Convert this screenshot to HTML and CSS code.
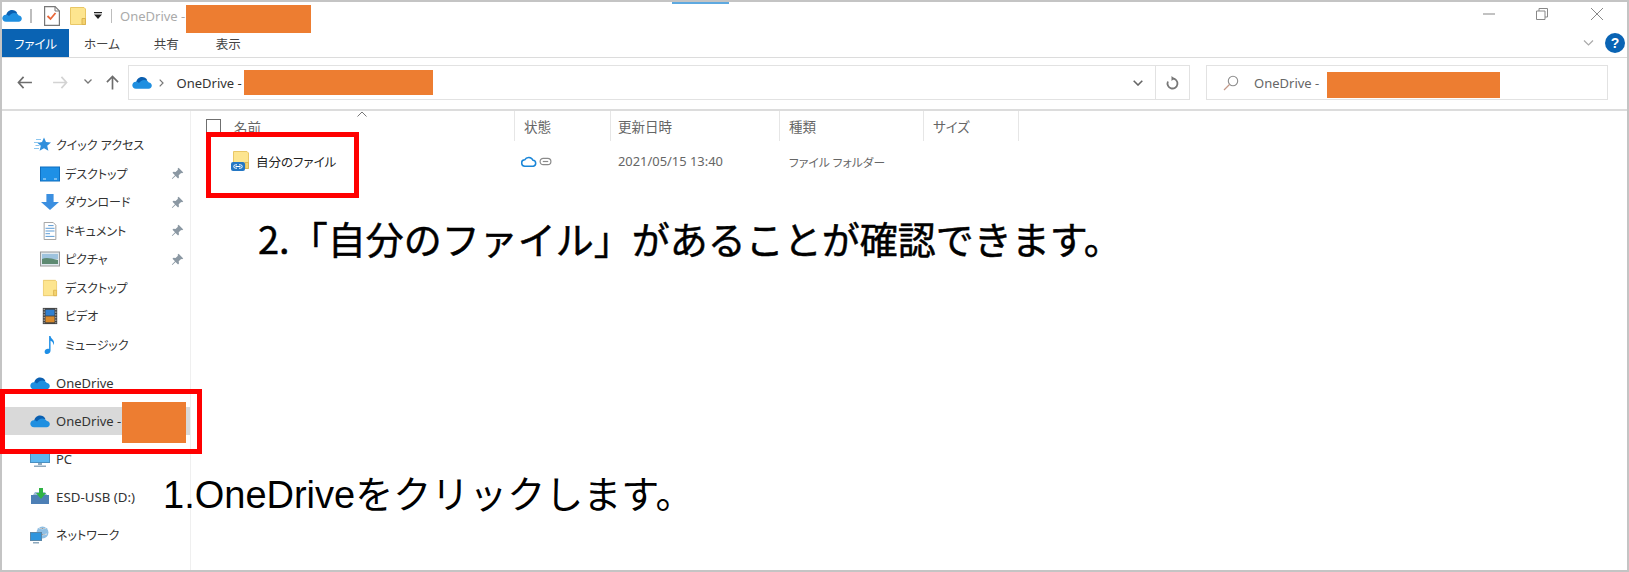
FILE: index.html
```html
<!DOCTYPE html>
<html lang="ja">
<head>
<meta charset="utf-8">
<title>OneDrive</title>
<link rel="stylesheet" href="styles.css">
</head>
<body>
<svg class="defs" aria-hidden="true">
  <symbol id="cloud" viewBox="0 0 20 13">
    <path fill="#0a5fb0" d="M4 7C4.300 3.600 6.800 1 10 1c2.300 0 4.200 1.200 5.300 3.200L10 9 4.500 9z"/>
    <path fill="#1f8fe0" d="M4 12.800C1.800 12.800.3 11.200.3 9.300.3 7.400 1.800 5.800 3.800 5.800c1.200 0 2.300.5 3.200 1.300 1-1.900 3-3.200 5.200-3.200 2.100 0 3.800 1 4.600 2.600 1.800.1 3 1.400 3 3.100 0 1.800-1.300 3.200-3.100 3.200z"/>
  </symbol>
  <symbol id="folder" viewBox="0 0 16 18">
    <path fill="#fde58f" stroke="#e9c766" d="M.5.500h13.500l1.500 1.500v15.500H.5z"/>
    <path fill="#f4d36f" stroke="#dcb451" d="M12 11.500h3.500v6H12z"/>
  </symbol>
  <symbol id="pin" viewBox="0 0 14 14">
    <path fill="#8b98a3" d="M8.200 0.800l5 5-1.300 1-1-.4-2.600 2.600.3 2.300-1 1-2.700-2.700L1.500 13 .9 12.400l3.400-3.500-2.700-2.700 1-1 2.300.3 2.600-2.600-.4-1z"/>
  </symbol>
  <symbol id="linkmark" viewBox="0 0 14 10">
    <rect x="1" y="1.500" width="12" height="7" rx="3.500" fill="none" stroke="#8a8a8a" stroke-width="1.300"/>
    <path d="M4 5h6" stroke="#8a8a8a" stroke-width="1.300"/>
  </symbol>
</svg>

<div class="window">
  <div class="frame">
    <div class="titlebar">
      <svg class="i-cloud"><use href="#cloud"/></svg>
      <span class="tb-sep tb-sep-a"></span>
      <svg class="i-check" viewBox="0 0 16 20"><path fill="#fff" stroke="#777" stroke-width="1.200" d="M.6.600h10.500l4.300 4.300v14.500H.6z"/><path fill="none" stroke="#777" d="M11 .6v4.400h4.400"/><path fill="none" stroke="#e8673a" stroke-width="1.800" d="M3.500 10l3 3 5-6"/></svg>
      <svg class="i-qfolder"><use href="#folder"/></svg>
      <svg class="i-drop" viewBox="0 0 8 7"><path d="M0 0h8v1.200H0z M0 2.500h8L4 7z" fill="#222"/></svg>
      <span class="tb-sep tb-sep-b"></span>
      <span class="tb-title">OneDrive -</span>
      <div class="winbtns">
        <svg class="wb wb-min" viewBox="0 0 12 12"><path d="M0 6h12" stroke="#999" stroke-width="1.200"/></svg>
        <svg class="wb wb-max" viewBox="0 0 12 12"><path d="M.5 3h8.500v8.500H.5z M3 3V.5h8.500V9H9" fill="none" stroke="#888"/></svg>
        <svg class="wb wb-close" viewBox="0 0 12 12"><path d="M0 0l12 12M12 0L0 12" stroke="#888" stroke-width="1"/></svg>
      </div>
    </div>

    <div class="ribbon">
      <span class="tab tab-file">ファイル</span>
      <span class="tab tab-home">ホーム</span>
      <span class="tab tab-share">共有</span>
      <span class="tab tab-view">表示</span>
      <svg class="i-collapse" viewBox="0 0 10 6"><path d="M.5.500L5 5 9.500.500" fill="none" stroke="#aaa" stroke-width="1.200"/></svg>
      <span class="help">?</span>
    </div>

    <div class="navbar">
      <svg class="nav-ic nav-back" viewBox="0 0 16 14"><path d="M7 1L1.500 7 7 13M1.500 7H16" fill="none" stroke="#6d6d6d" stroke-width="1.800"/></svg>
      <svg class="nav-ic nav-fwd" viewBox="0 0 16 14"><path d="M9 1l5.500 6L9 13M14.500 7H0" fill="none" stroke="#d3d3d3" stroke-width="1.800"/></svg>
      <svg class="nav-down" viewBox="0 0 8 5"><path d="M.5.500L4 4 7.500.500" fill="none" stroke="#777" stroke-width="1.300"/></svg>
      <svg class="nav-up" viewBox="0 0 14 15"><path d="M1 7l6-6 6 6M7 1v14" fill="none" stroke="#6d6d6d" stroke-width="1.800"/></svg>
      <div class="address">
        <svg class="i-cloud"><use href="#cloud"/></svg>
        <svg class="crumb" viewBox="0 0 5 8"><path d="M.7.700L4 4 .7 7.300" fill="none" stroke="#777" stroke-width="1.200"/></svg>
        <span class="addr-text">OneDrive -</span>
        <svg class="addr-chev" viewBox="0 0 10 6"><path d="M.7.700L5 5 9.300.700" fill="none" stroke="#666" stroke-width="1.600"/></svg>
        <span class="refresh">
          <svg viewBox="0 0 13 14"><path d="M6.500 2.500a5 5 0 1 1-4.600 3" fill="none" stroke="#777" stroke-width="1.800"/><path d="M5.500 0v5L8.500 2.500z" fill="#777"/></svg>
        </span>
      </div>
      <div class="search">
        <svg viewBox="0 0 16 16"><circle cx="10" cy="6" r="4.700" fill="none" stroke="#8d8d8d" stroke-width="1.100"/><path d="M6.500 9.500L1 15" stroke="#c49a8a" stroke-width="1.200"/></svg>
        <span>OneDrive -</span>
      </div>
    </div>

    <div class="body">
      <nav class="sidebar">
        <ul class="side-group">
          <li class="row row-head">
            <svg class="side-ic star" viewBox="0 0 18 16"><path fill="#2f8fdc" d="M11 .5l2 4.500 5 .5-3.800 3.300 1.200 5-4.400-2.600-4.400 2.600 1.200-5L4.500 6l4.500-1z"/><path d="M3 2.500h5M1 5.500h5M2.500 8.500h4M1 11.500h5" stroke="#8cc6ef" stroke-width="1.200"/></svg>
            <span class="label">クイック アクセス</span>
          </li>
          <li class="row row-sub">
            <svg class="side-ic" viewBox="0 0 20 16"><rect x=".5" y="1" width="19" height="14" fill="#1e90e6" stroke="#0f6fc0"/><path d="M3 13h3M14 13h3" stroke="#cfe9fb"/></svg>
            <span class="label">デスクトップ</span><svg class="pin"><use href="#pin"/></svg>
          </li>
          <li class="row row-sub">
            <svg class="side-ic" viewBox="0 0 20 20"><path fill="#3b8fe0" d="M6 1h8v9h6l-10 9L0 10h6z"/></svg>
            <span class="label">ダウンロード</span><svg class="pin"><use href="#pin"/></svg>
          </li>
          <li class="row row-sub">
            <svg class="side-ic" viewBox="0 0 20 20"><path fill="#fff" stroke="#999" d="M3.500.500h10l3 3v16h-13z"/><path d="M8 4h6M5 7h10M5 10h10M5 13h5M5 16h10" stroke="#5b9bd5" stroke-width="1.100"/></svg>
            <span class="label">ドキュメント</span><svg class="pin"><use href="#pin"/></svg>
          </li>
          <li class="row row-sub">
            <svg class="side-ic" viewBox="0 0 20 16"><rect x=".5" y="1" width="19" height="14" fill="#dfe8ee" stroke="#999"/><rect x="2" y="3" width="16" height="5" fill="#9ec3de"/><path d="M2 8c4-2 8-1 16 1v4H2z" fill="#5d8a72"/></svg>
            <span class="label">ピクチャ</span><svg class="pin"><use href="#pin"/></svg>
          </li>
          <li class="row row-sub">
            <svg class="side-ic" viewBox="0 0 20 20"><use href="#folder" x="2" y="0" width="16" height="20"/></svg>
            <span class="label">デスクトップ</span>
          </li>
          <li class="row row-sub">
            <svg class="side-ic" viewBox="0 0 20 20"><rect x="2" y="1" width="16" height="18" fill="#444"/><rect x="5" y="3" width="10" height="6.500" fill="#2f7fd0"/><rect x="5" y="10.500" width="10" height="6.500" fill="#d98a2b"/><path d="M3.500 2v16M16.500 2v16" stroke="#ddd" stroke-dasharray="1.500 1.500"/></svg>
            <span class="label">ビデオ</span>
          </li>
          <li class="row row-sub">
            <svg class="side-ic" viewBox="0 0 20 20"><path fill="#1f8fe6" d="M9 0h1.600c.3 3 3.900 3.800 3.900 7.500 0 1-.3 1.800-.8 2.500.2-3-1.700-4-3.100-4.700V16c0 2.200-1.800 4-4 4-1.500 0-2.600-1-2.600-2.300 0-2 2-3.400 3.700-3.400.5 0 .9 0 1.300.2z"/></svg>
            <span class="label">ミュージック</span>
          </li>
        </ul>
        <ul class="side-group side-group-b">
          <li class="row row-top">
            <svg class="side-ic"><use href="#cloud"/></svg><span>OneDrive</span>
          </li>
          <li class="row row-top row-selected">
            <svg class="side-ic"><use href="#cloud"/></svg><span>OneDrive -</span>
          </li>
          <li class="row row-top">
            <svg class="side-ic" viewBox="0 0 20 18"><rect x=".5" y=".5" width="19" height="12" fill="#5cb6f0" stroke="#4a8fc0"/><path d="M8 13h4v2H8zM4 15.500h12V17H4z" fill="#8fa9bd"/></svg><span>PC</span>
          </li>
          <li class="row row-top">
            <svg class="side-ic" viewBox="0 0 20 18"><path d="M1 7h18v9H1z" fill="#4d7fb5"/><path d="M3 7l2-3h10l2 3z" fill="#9dbad6"/><path d="M9 0h4v5h3l-5 6-5-6h3z" fill="#2fb344"/></svg><span class="esd">ESD-USB (D:)</span>
          </li>
          <li class="row row-top">
            <svg class="side-ic" viewBox="0 0 20 18"><circle cx="12.500" cy="6.500" r="6" fill="#8fbfe4"/><path d="M9 2c2 1 5 1 7 0M8 8c3 1 6 1 9 0" stroke="#fff" stroke-width=".800"/><rect x=".5" y="6.500" width="11" height="8" fill="#2f95dd" stroke="#5a87a8"/><path d="M3 16h6v1.500H3z" fill="#8fa9bd"/></svg><span class="label">ネットワーク</span>
          </li>
        </ul>
      </nav>

      <section class="files">
        <svg class="sort-caret" viewBox="0 0 10 6"><path d="M.5 5.500L5 1l4.500 4.500" fill="none" stroke="#777" stroke-width="1"/></svg>
        <div class="cols cols-head">
          <div class="col col-name"><span class="checkbox"></span><span>名前</span></div>
          <div class="col">状態</div>
          <div class="col col-date">更新日時</div>
          <div class="col">種類</div>
          <div class="col">サイズ</div>
        </div>
        <div class="cols cols-row">
          <div class="cell cell-name">
            <span class="file-ic">
              <svg class="file-folder"><use href="#folder"/></svg>
              <svg class="file-link" viewBox="0 0 14 9"><rect width="14" height="9" rx="2" fill="#2477c4"/><path d="M6 2.800H4.500a1.700 1.700 0 0 0 0 3.400H6M8 2.800h1.500a1.700 1.700 0 0 1 0 3.400H8M4.500 4.500h5" fill="none" stroke="#fff"/></svg>
            </span>
            <span class="file-name">自分のファイル</span>
          </div>
          <div class="cell cell-status">
            <svg class="st-cloud" viewBox="0 0 16 11"><path d="M4 10.200a3.200 3.200 0 0 1-.3-6.400A4.600 4.600 0 0 1 12 4.300a3 3 0 0 1 .4 5.900z" fill="none" stroke="#1a86d8" stroke-width="1.500"/></svg>
            <svg class="st-link"><use href="#linkmark"/></svg>
          </div>
          <div class="cell cell-muted cell-date">2021/05/15 13:40</div>
          <div class="cell cell-muted cell-type">ファイル フォルダー</div>
          <div class="cell"></div>
        </div>
      </section>
    </div>
  </div>

  <span class="loadbar"></span>
  <span class="redact redact-title"></span>
  <span class="redact redact-addr"></span>
  <span class="redact redact-search"></span>
  <span class="redact redact-side"></span>
  <span class="mark mark-file"></span>
  <span class="mark mark-side"></span>
  <p class="note note-2">2.「自分のファイル」があることが確認できます。</p>
  <p class="note note-1">1.OneDriveをクリックします。</p>
</div>
</body>
</html>
```
FILE: styles.css
```css
* { box-sizing: border-box; }
html, body { margin: 0; padding: 0; background: #fff; }
body {
  font-family: "Noto Sans", "Noto Sans CJK JP", sans-serif;
  font-size: 13px;
  color: #333;
  font-feature-settings: "palt";
}
ul { list-style: none; margin: 0; padding: 0; }
svg { display: block; flex: none; }
.defs { position: absolute; width: 0; height: 0; }

.window {
  position: relative;
  width: 1629px;
  height: 572px;
  padding: 2px;
  background: #c4c4c4;
  overflow: hidden;
}
.frame {
  height: 100%;
  background: #fff;
  display: flex;
  flex-direction: column;
}

/* title bar */
.titlebar { height: 27px; display: flex; align-items: center; flex: none; }
.i-cloud { width: 20px; height: 13px; }
.tb-sep { width: 1.5px; height: 14px; background: #bdbdbd; }
.tb-sep-a { margin-left: 8px; }
.i-check { width: 16px; height: 20px; margin-left: 12px; }
.i-qfolder { width: 16px; height: 18px; margin-left: 10px; }
.i-drop { width: 8px; height: 7px; margin-left: 8px; }
.tb-sep-b { margin-left: 9px; }
.tb-title { margin-left: 8px; color: #aaa; }
.winbtns { margin-left: auto; display: flex; align-items: center; padding-right: 24px; }
.wb { width: 12px; height: 12px; margin-top: -4px; }
.wb-max { margin-left: 41px; }
.wb-close { margin-left: 43px; }

/* ribbon */
.ribbon {
  height: 29px;
  flex: none;
  display: flex;
  align-items: center;
  border-bottom: 1px solid #dcdcdc;
}
.tab { font-size: 12.500px; color: #444; }
.tab-file {
  width: 67px;
  height: 28px;
  background: #0a63b3;
  color: #fff;
  display: flex;
  align-items: center;
  justify-content: center;
}
.tab-home { margin-left: 15px; }
.tab-share { margin-left: 34px; }
.tab-view { margin-left: 37px; }
.i-collapse { width: 11px; height: 6px; margin-left: auto; }
.help {
  width: 20px;
  height: 20px;
  border-radius: 50%;
  margin: 0 2px 0 11px;
  background: #0a64b4;
  color: #fff;
  font: bold 14px/20px "Liberation Sans", sans-serif;
  text-align: center;
}

/* nav bar */
.navbar {
  height: 53px;
  flex: none;
  display: flex;
  align-items: center;
  padding: 0 19px 2px 15px;
  border-bottom: 2px solid #dcdcdc;
}
.nav-ic { width: 15px; height: 13px; }
.nav-fwd { margin-left: 21px; }
.nav-down { width: 8px; height: 5px; margin-left: 16px; margin-top: -2px; }
.nav-up { width: 13px; height: 15px; margin-left: 14px; }
.address {
  margin-left: 9px;
  width: 1062px;
  height: 35px;
  border: 1.500px solid #e2e2e2;
  display: flex;
  align-items: center;
  padding-left: 2.500px;
}
.crumb { width: 5px; height: 8px; margin-left: 7px; }
.addr-text { margin-left: 13px; color: #333; }
.addr-chev { width: 10px; height: 6px; margin-left: auto; }
.refresh {
  width: 34px;
  height: 100%;
  margin-left: 12px;
  border-left: 1.500px solid #e2e2e2;
  display: flex;
  align-items: center;
  justify-content: center;
}
.refresh svg { width: 13px; height: 14px; }
.search {
  margin-left: 16px;
  flex: 1;
  height: 35px;
  border: 1.500px solid #e2e2e2;
  display: flex;
  align-items: center;
  padding-left: 16px;
  color: #666;
}
.search svg { width: 16px; height: 16px; }
.search span { margin-left: 15px; }

/* main */
.body { flex: 1; display: flex; min-height: 0; }
.sidebar {
  width: 189px;
  flex: none;
  border-right: 1px solid #efefef;
  padding-top: 20px;
}
.row { display: flex; align-items: center; height: 28.500px; position: relative; }
.row-head { padding-left: 31px; }
.row-sub { padding-left: 38px; }
.row-top { padding-left: 28px; height: 28px; }
.side-group-b { margin-top: 10px; display: flex; flex-direction: column; gap: 10px; }
.side-ic { width: 20px; height: 18px; margin-right: 5px; }
.row-top .side-ic { height: 14px; margin-right: 6px; }
.row-top:nth-child(n+3) .side-ic { height: 18px; }
.star { width: 18px; height: 16px; margin-right: 5px; }
.label { flex: 1; font-size: 12px; }
.esd { font-size: 13.300px; }
.pin { width: 13px; height: 13px; margin-right: 6px; }
.row-selected { background: #d9d9d9; margin-left: 3px; padding-left: 25px; }

/* file list */
.files { flex: 1; position: relative; }
.sort-caret { position: absolute; left: 166px; top: 0; width: 10px; height: 6px; }
.cols { display: grid; grid-template-columns: 324px 96px 169px 144px 95px; }
.cols-head { height: 30px; }
.col {
  color: #666;
  font-size: 13.500px;
  border-right: 1px solid #e6e6e6;
  padding: 5px 0 0 9px;
}
.col-date { padding-left: 7px; }
.col-name { display: flex; align-items: flex-start; gap: 13px; padding: 6px 0 0 15px; border-right: 1px solid #e6e6e6; }
.checkbox { width: 15px; height: 15px; border: 1.500px solid #6f6f6f; flex: none; margin-top: 2px; }
.cols-row { height: 40px; align-items: center; }
.cell { padding-left: 8px; font-size: 12.500px; display: flex; align-items: center; }
.cell-name { padding-left: 42px; }
.file-ic { position: relative; width: 16px; height: 20px; }
.file-folder { width: 16px; height: 18px; }
.file-link { position: absolute; left: -2px; bottom: 0; width: 14px; height: 9px; }
.file-name { margin-left: 7px; color: #222; font-size: 12.500px; }
.cell-status { padding-left: 6px; }
.st-cloud { width: 16px; height: 11px; }
.st-link { width: 13px; height: 9px; margin-left: 2px; }
.cell-muted { color: #666; }
.cell-date { font-size: 12.900px; padding-left: 7px; }
.cell-type { font-size: 11.750px; padding-left: 9px; }

/* overlays */
.loadbar { position: absolute; left: 672px; top: 2px; width: 57px; height: 2px; background: #5ea9e0; }
.redact { position: absolute; background: #ed7d31; }
.redact-title { left: 186px; top: 5px; width: 125px; height: 28px; }
.redact-addr { left: 244px; top: 70px; width: 189px; height: 25px; }
.redact-search { left: 1327px; top: 72px; width: 173px; height: 26px; }
.redact-side { left: 122px; top: 402px; width: 64px; height: 41px; }
.mark { position: absolute; border: 5px solid #f00; }
.mark-file { left: 206px; top: 132px; width: 153px; height: 66px; }
.mark-side { left: 0; top: 389px; width: 202px; height: 65px; }
.note {
  position: absolute;
  margin: 0;
  color: #000;
  white-space: nowrap;
  font-feature-settings: normal;
}
.note-1 { left: 163px; top: 470px; font-family: "Liberation Sans", "Noto Sans CJK JP", sans-serif; font-size: 38px; line-height: 50px; }
.note-2 {
  left: 258px;
  top: 213px;
  font-family: "Noto Sans CJK JP", sans-serif;
  font-size: 38px;
  line-height: 50px;
  font-weight: 400;
  -webkit-text-stroke: .5px #000;
}
```
